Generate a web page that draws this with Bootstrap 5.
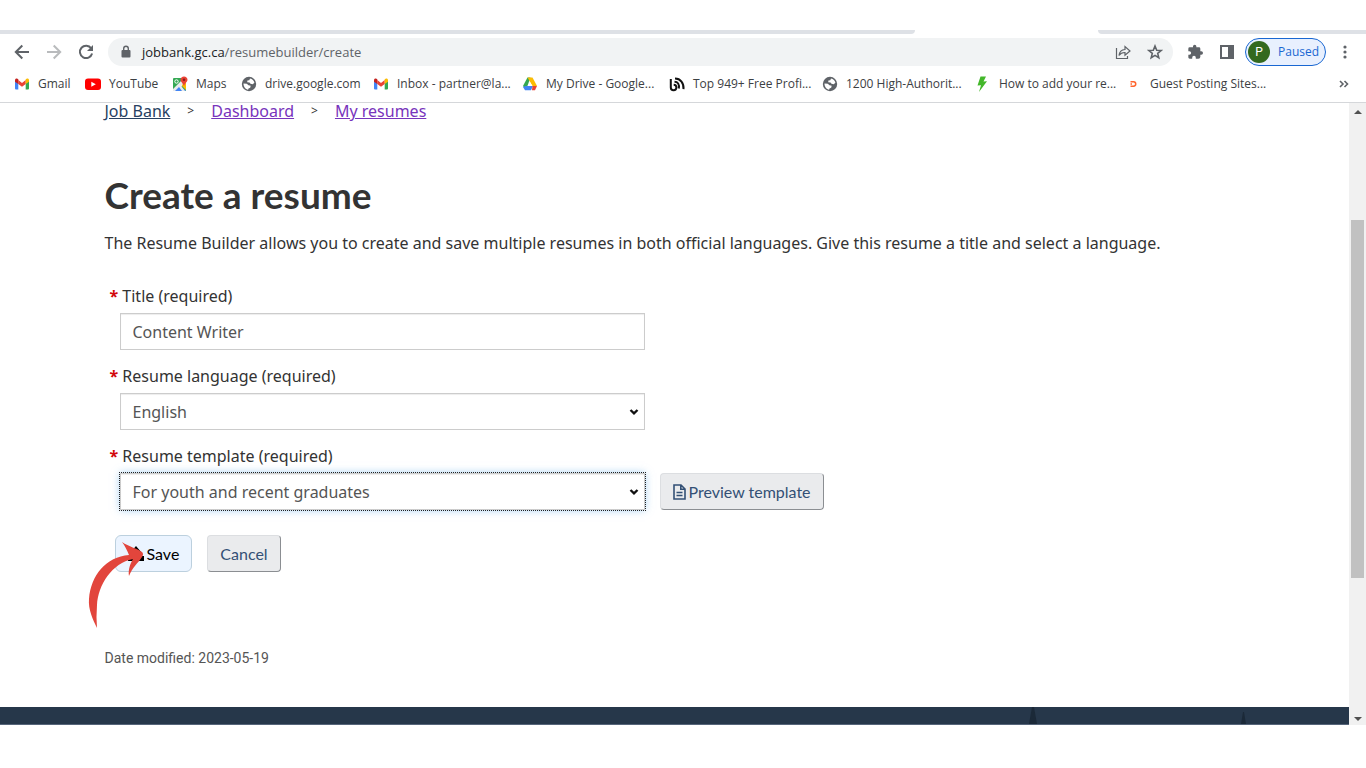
<!DOCTYPE html>
<html lang="en">
<head>
<meta charset="utf-8">
<meta name="viewport" content="width=device-width, initial-scale=1">
<title>Create a resume - Job Bank</title>
<link href="https://cdn.jsdelivr.net/npm/bootstrap@5.3.0/dist/css/bootstrap.min.css" rel="stylesheet">
<style>
body{font-family:"Noto Sans",sans-serif;font-size:16px;line-height:24px;color:#333;background:#fff;overflow-x:hidden}
svg{display:block;flex:none}
.browser-ui{font-family:"Open Sans",sans-serif;font-size:12px;line-height:16px;color:#3c4043;border-bottom:1px solid #d5d7da}
.tab-strip{height:4px;margin-top:30px}
.strip-left,.strip-right{background:#dee1e6}
.strip-left{flex:0 0 67%;border-bottom-right-radius:6px}
.strip-right{flex:0 0 268px;border-bottom-left-radius:6px}
.toolbar{height:35px;padding:0 14px}
.plain-btn{border:0;background:none;padding:0;color:#5f6368}
.omnibox{height:28px;border-radius:14px;background:#f1f3f4;padding:0 10px 0 12px;margin:0 14px}
.url-field{font-size:13px;color:#5f6368;margin-left:10px}
.host{color:#202124}
.profile{height:28px;width:81px;border:1px solid #1967d2;border-radius:14px;background:#e8f0fe;color:#1967d2;padding:0 0 0 2px;margin:0 8px 0 10px;gap:8px}
.avatar{width:22px;height:22px;border-radius:50%;background:#33691e;color:#fff;font-family:Roboto,sans-serif;line-height:22px;text-align:center}
.bookmarks{display:grid;grid-template-columns:71px 87px 69px 132px 149px 147px 153px 153px 151px 1fr auto;height:33px;padding:0 17px 4px 14px}
.bookmarks a{color:#3c4043;text-decoration:none;white-space:nowrap;gap:8px}
.page-frame{height:622px}
.page-body{min-width:0}
.page-col{max-width:1170px;padding:0 15px}
.crumbs{line-height:16px;gap:17px}
.crumbs a{color:#7834bc}
.crumbs a.home{color:#284162}
.crumb-sep{font-size:12px}
h1{font-family:Lato,sans-serif;font-weight:700;font-size:37px;line-height:44px;margin:54px 0 0;color:#333}
.intro{margin:14px 0 0}
.form-area{margin-top:29px;padding-left:5px}
.star{color:#d3080c;font-weight:700}
.field-label{display:block;margin:0 0 5px}
.field-row{margin:0 0 14px 10px;gap:15px}
.field-box{width:525px;max-width:100%;height:37px;border:1px solid #ccc;border-radius:0;padding:6px 12px;color:#555;background-color:#fff;box-shadow:inset 0 1px 1px rgba(0,0,0,.075);font-size:16px;line-height:23px;appearance:none}
select.field-box{padding:7px 12px 5px;background-image:url("data:image/svg+xml,%3Csvg xmlns='http://www.w3.org/2000/svg' viewBox='0 0 10 8'%3E%3Cpath d='M1.500 2 5 5.300 8.500 2' fill='none' stroke='%23111' stroke-width='2.400'/%3E%3C/svg%3E");background-repeat:no-repeat;background-size:10px 8px;background-position:right 5px center}
.field-box.is-active{outline:1px dotted #222;box-shadow:inset 0 1px 1px rgba(0,0,0,.075),0 0 8px rgba(102,175,233,.6)}
.act{font-family:Lato,sans-serif;font-size:16px;line-height:23px;height:37px;padding:6px 12px;border:1px solid #dcdee1;border-right-color:#8b8e92;border-bottom-color:#8b8e92;border-radius:4px;background:#eaebed;color:#335075;gap:3px}
.act-save{background:#ebf4ff;border-color:#bcd0de;color:#000;border-radius:6px}
.action-row{margin:25px 0 0 5px;gap:15px}
.pointer{position:absolute;left:-27px;top:6px}
.modified{font-family:Roboto,sans-serif;font-size:14px;line-height:20px;color:#555;margin:76px 0 0}
.page-foot{height:18px;background:#26374a;border-bottom:1px solid #56657a}
.peaks{gap:204px;margin-right:103px}
.scroll-track{flex:0 0 17px;background:#f1f1f1;padding:7px 2px 4px}
.thumb{height:358px;margin-top:106px;background:#c1c1c1}
</style>
</head>
<body>
<svg width="0" height="0" class="position-absolute" aria-hidden="true">
<defs>
<symbol id="gmail" viewBox="0 0 16 16"><path d="M1 4v8.500Q1 13.500 2 13.500h2.300V7z" fill="#4285f4"/><path d="M15 4v8.500q0 1-1 1h-2.300V7z" fill="#34a853"/><path d="M4.300 4 8 7l3.700-3v4L8 10.700 4.300 8z" fill="#ea4335"/><path d="M1 4.500C1 2.500 2.900 2 4.300 3.300V8L1 5.700z" fill="#c5221f"/><path d="M15 4.500c0-2-1.900-2.500-3.300-1.200V8L15 5.700z" fill="#fbbc04"/></symbol>
<symbol id="globe" viewBox="0 0 16 16"><circle cx="8" cy="8" r="7.200" fill="#5f6368"/><path d="M9 2.600c2.300.4 4 2 4.400 4.200l-1.700 1.400-2.200-.4-1-1.400-2.300-.1.200-1.700 1.900-.4zM2.500 7.400l3.300.3 1.700 1.600 2.200.4-.5 2-1.700.8-.4 1.200C4.600 13.200 2.400 10.800 2.500 7.400z" fill="#fff"/></symbol>
</defs>
</svg>
<header class="browser-ui">
  <div class="tab-strip d-flex justify-content-between"><div class="strip-left"></div><div class="strip-right"></div></div>
  <div class="toolbar d-flex align-items-center">
    <div class="d-flex gap-3">
      <button class="plain-btn" aria-label="Back"><svg width="16" height="16" viewBox="0 0 16 16" fill="none" stroke="#5f6368" stroke-width="2"><path d="M15 8H2M8.300 1.500 1.800 8l6.500 6.500"/></svg></button>
      <button class="plain-btn" aria-label="Forward"><svg width="16" height="16" viewBox="0 0 16 16" fill="none" stroke="#b9bbbd" stroke-width="2"><path d="M1 8h13M7.700 1.500 14.200 8l-6.500 6.500"/></svg></button>
      <button class="plain-btn" aria-label="Reload"><svg width="16" height="16" viewBox="0 0 16 16"><path d="M13.200 4.300A6.200 6.200 0 1 0 14.100 9.500" fill="none" stroke="#5f6368" stroke-width="2"/><path d="M15 1v6H9z" fill="#5f6368"/></svg></button>
    </div>
    <div class="omnibox d-flex align-items-center flex-fill">
      <svg width="12" height="14" viewBox="0 0 12 14"><rect x="1.500" y="5" width="9" height="7.500" rx="1" fill="#5f6368"/><path d="M3.700 5V3.500a2.300 2.300 0 0 1 4.600 0V5" fill="none" stroke="#5f6368" stroke-width="1.400"/></svg>
      <a href="#" class="url-field flex-fill text-decoration-none"><span class="host">jobbank.gc.ca</span>/resumebuilder/create</a>
      <button class="plain-btn me-3" aria-label="Share"><svg width="16" height="16" viewBox="0 0 16 16" fill="none" stroke="#5f6368" stroke-width="1.200"><path d="M1.500 4v10.500h11V12M4 11.500C4.500 7.500 6.800 5.700 10 5.500V2.500L15 7l-5 4.300V8.500C7.500 8.400 5.500 9.300 4 11.500z"/></svg></button>
      <button class="plain-btn" aria-label="Bookmark this page"><svg width="16" height="16" viewBox="0 0 16 16" fill="none" stroke="#5f6368" stroke-width="1.600"><path d="m8 2 1.700 4.200 4.500.3-3.500 2.900 1.100 4.400L8 11.400l-3.800 2.400 1.100-4.400L1.800 6.500l4.500-.3z"/></svg></button>
    </div>
    <div class="d-flex align-items-center gap-3">
      <button class="plain-btn" aria-label="Extensions"><svg width="16" height="16" viewBox="0 0 24 24" fill="#5f6368"><path d="M21.500 11H20V7a2 2 0 0 0-2-2h-4V3.500a2.500 2.500 0 0 0-5 0V5H4a2 2 0 0 0-2 2v3.800h1.500a2.700 2.700 0 0 1 0 5.400H2V20c0 1.100.9 2 2 2h3.800v-1.500a2.700 2.700 0 0 1 5.400 0V22H17a3 3 0 0 0 3-3v-3h1.500a2.500 2.500 0 0 0 0-5z"/></svg></button>
      <button class="plain-btn" aria-label="Side panel"><svg width="16" height="16" viewBox="0 0 16 16"><path d="M1 1h14v14H1zM3 3v10h6V3z" fill="#5f6368" fill-rule="evenodd"/></svg></button>
    </div>
    <button class="profile d-flex align-items-center"><span class="avatar">P</span><span>Paused</span></button>
    <button class="plain-btn ms-1" aria-label="Menu"><svg width="14" height="14" viewBox="0 0 14 14" fill="#5f6368"><circle cx="7" cy="2" r="1.600"/><circle cx="7" cy="7" r="1.600"/><circle cx="7" cy="12" r="1.600"/></svg></button>
  </div>
  <nav class="bookmarks align-items-center" aria-label="Bookmarks">
    <a href="#" class="d-flex"><svg width="16" height="16"><use href="#gmail"/></svg>Gmail</a>
    <a href="#" class="d-flex"><svg width="16" height="16" viewBox="0 0 16 16"><rect y="2.500" width="16" height="11.500" rx="3" fill="#f00"/><path d="m6.300 5.700 4.500 2.500-4.500 2.600z" fill="#fff"/></svg>YouTube</a>
    <a href="#" class="d-flex"><svg width="16" height="16" viewBox="0 0 16 16"><rect x="1" y="2" width="13" height="13" rx="1" fill="#34a853"/><path d="m1 15 6.500-6L14 15z" fill="#4285f4"/><path d="M1 13 11 3l3 3-4.500 4.500L13 15h-3L7 11l-4 4H1z" fill="#e8eaed"/><path d="m11 7 3-2v9l-4-4z" fill="#fbbc04"/><circle cx="4.500" cy="5.500" r="1.700" fill="none" stroke="#fff"/><path d="M12 .5c2 0 3.500 1.500 3.500 3.300C15.500 6 12.800 7 12 10.500 11.200 7 8.500 6 8.500 3.800 8.500 2 10 .5 12 .5z" fill="#ea4335"/><circle cx="12" cy="3.800" r="1.300" fill="#8c1d18"/></svg>Maps</a>
    <a href="#" class="d-flex"><svg width="16" height="16"><use href="#globe"/></svg>drive.google.com</a>
    <a href="#" class="d-flex"><svg width="16" height="16"><use href="#gmail"/></svg>Inbox - partner@la...</a>
    <a href="#" class="d-flex"><svg width="16" height="16" viewBox="0 0 16 16"><path d="M5.500 1.500h3L4 14 1 10z" fill="#34a853"/><path d="M5.500 1.500h5L15 10h-4.500z" fill="#fbbc04"/><path d="M3.500 10H11l-2 4.300H3L1 11z" fill="#4285f4"/><path d="M10.500 10H15l-2 4.300h-3z" fill="#ea4335"/><path d="M8 6l2.300 4H5.700z" fill="#fff"/></svg>My Drive - Google...</a>
    <a href="#" class="d-flex"><svg width="16" height="16" viewBox="0 0 16 16" fill="none" stroke="#111" stroke-width="2"><path d="M1.800 3v8.500a2.800 2.800 0 1 0 2.900-2.800M5.500 5.700c3.300 0 5 2.600 4.300 6.800M6 2.600c5.500 0 9 4.500 8.500 10.600"/></svg>Top 949+ Free Profi...</a>
    <a href="#" class="d-flex"><svg width="16" height="16"><use href="#globe"/></svg>1200 High-Authorit...</a>
    <a href="#" class="d-flex"><svg width="16" height="16" viewBox="0 0 16 16"><path d="M5.500.5H11L8.500 5.500l3.500-.3L4 16l2-6.800L2.500 9.500z" fill="#43b72a"/></svg>How to add your re...</a>
    <a href="#" class="d-flex"><svg width="16" height="16" viewBox="0 0 16 16"><path d="M4.500 5.800h3C10.500 6 10.500 10 7.500 10.200h-3M4.500 8h1.500" fill="none" stroke="#ff642d" stroke-width="1.500"/></svg>Guest Posting Sites...</a>
    <button class="plain-btn" aria-label="More bookmarks"><svg width="10" height="8" viewBox="0 0 10 8" fill="none" stroke="#5f6368" stroke-width="1.600"><path d="m1 1 3 3-3 3M5.500 1l3 3-3 3"/></svg></button>
  </nav>
</header>
<div class="page-frame d-flex">
  <div class="page-body d-flex flex-column flex-fill">
    <main class="page-col w-100 mx-auto">
      <nav class="crumbs d-flex align-items-center" aria-label="Breadcrumb">
        <a href="#" class="home">Job Bank</a><span class="crumb-sep">&gt;</span><a href="#">Dashboard</a><span class="crumb-sep">&gt;</span><a href="#">My resumes</a>
      </nav>
      <h1>Create a resume</h1>
      <p class="intro">The Resume Builder allows you to create and save multiple resumes in both official languages. Give this resume a title and select a language.</p>
      <form class="form-area">
        <label class="field-label" for="title"><span class="star">*</span> Title (required)</label>
        <div class="field-row d-flex"><input id="title" class="field-box" type="text" value="Content Writer"></div>
        <label class="field-label" for="language"><span class="star">*</span> Resume language (required)</label>
        <div class="field-row d-flex"><select id="language" class="field-box"><option>English</option><option>French</option></select></div>
        <label class="field-label" for="template"><span class="star">*</span> Resume template (required)</label>
        <div class="field-row d-flex"><select id="template" class="field-box is-active"><option>For youth and recent graduates</option></select>
          <button type="button" class="act d-flex align-items-center"><svg width="13" height="16" viewBox="0 0 13 16" fill="none" stroke="#335075" stroke-width="1.600"><path d="M1 1h7l4 4v10H1zM7.800 1v4.300H12M3.500 8.500h6M3.500 11.500h6"/></svg>Preview template</button></div>
        <div class="action-row d-flex position-relative">
          <button type="button" class="act act-save d-flex align-items-center"><svg width="16" height="16" viewBox="0 0 16 16"><path d="M8 0 14 7h-3v4H5V7H2zM0 10h16v5H0z"/></svg>Save</button>
          <button type="button" class="act">Cancel</button>
          <svg class="pointer" width="60" height="88" viewBox="0 0 60 88" aria-hidden="true"><path d="M9 87C5 79 0 68 1 58 3 34 18 16 41 14 39 9 37 5 34 1c7 5 15 6 20 10q2 2 0 5c-4 6-10 11-13 19-1-6 1-12 4-17C24 22 10 44 9 64Q8 76 9 87z" fill="#e2453c"/></svg>
        </div>
      </form>
      <p class="modified">Date modified: 2023-05-19</p>
    </main>
    <footer class="page-foot mt-auto d-flex justify-content-end"><div class="peaks d-flex align-items-end"><svg width="8" height="17" viewBox="0 0 8 17"><path d="M0 17 3 0h2l3 17z" fill="#1b2938"/></svg><svg width="5" height="12" viewBox="0 0 5 12"><path d="M0 12 2 0h1l2 12z" fill="#1b2938"/></svg></div></footer>
  </div>
  <div class="scroll-track d-flex flex-column justify-content-between" aria-hidden="true">
    <div><svg class="mx-auto" width="8" height="4" viewBox="0 0 8 4"><path d="M4 0l4 4H0z" fill="#505050"/></svg><div class="thumb"></div></div>
    <svg class="mx-auto" width="8" height="4" viewBox="0 0 8 4"><path d="M0 0h8L4 4z" fill="#505050"/></svg>
  </div>
</div>
<script src="https://cdn.jsdelivr.net/npm/bootstrap@5.3.0/dist/js/bootstrap.bundle.min.js"></script>
</body>
</html>
